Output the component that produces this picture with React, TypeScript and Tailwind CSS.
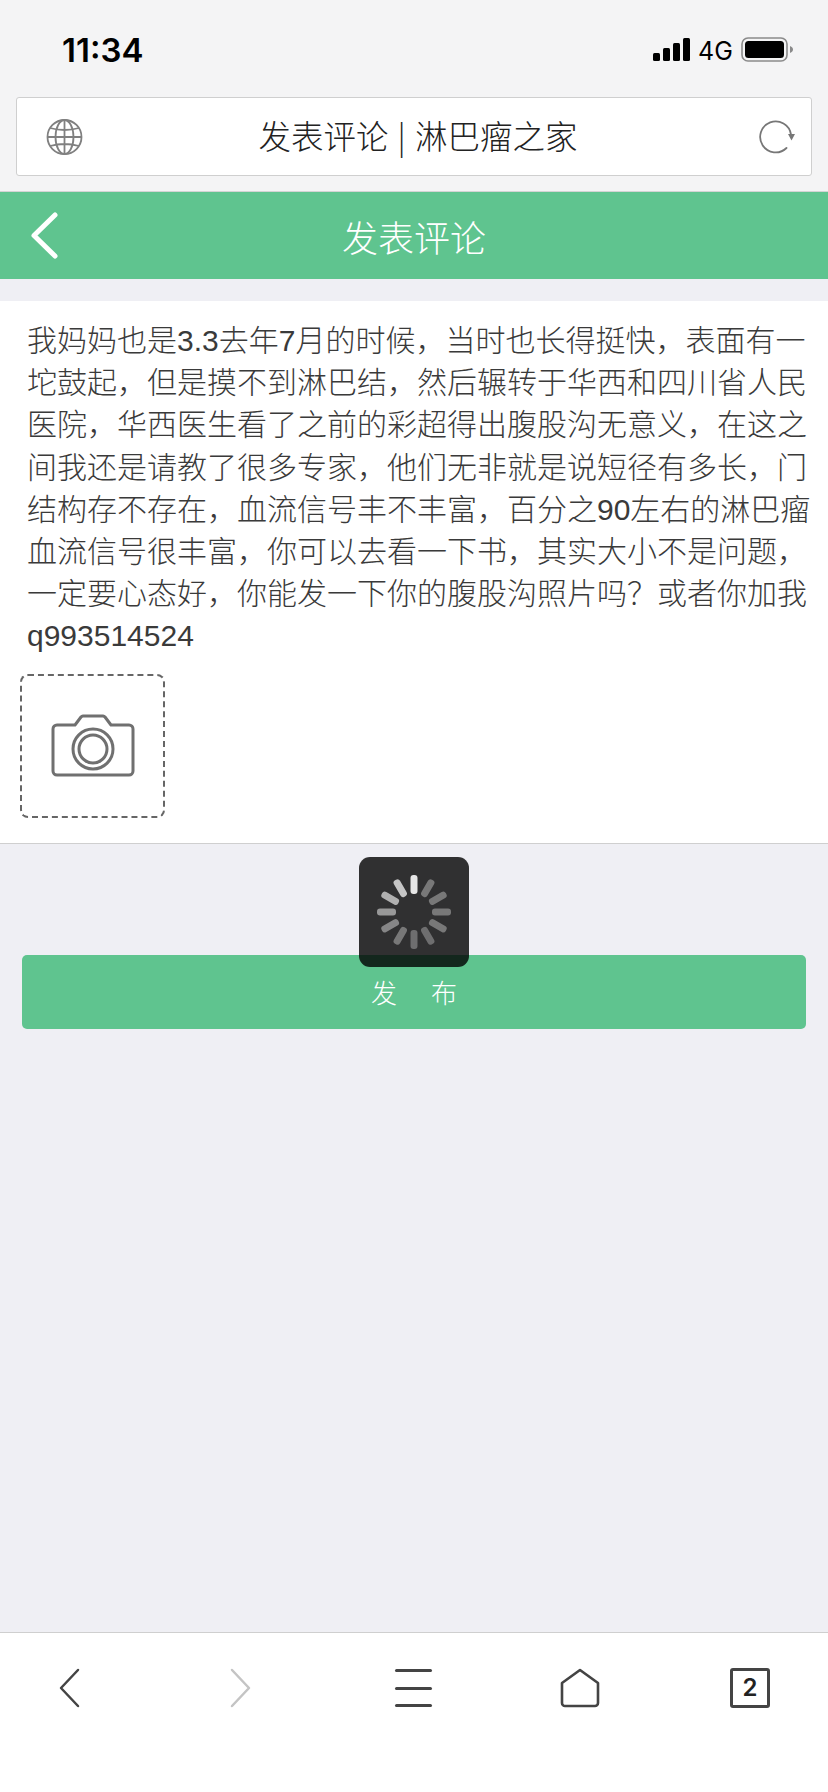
const lines = [
  '我妈妈也是3.3去年7月的时候，当时也长得挺快，表面有一',
  '坨鼓起，但是摸不到淋巴结，然后辗转于华西和四川省人民',
  '医院，华西医生看了之前的彩超得出腹股沟无意义，在这之',
  '间我还是请教了很多专家，他们无非就是说短径有多长，门',
  '结构存不存在，血流信号丰不丰富，百分之90左右的淋巴瘤',
  '血流信号很丰富，你可以去看一下书，其实大小不是问题，',
  '一定要心态好，你能发一下你的腹股沟照片吗？或者你加我',
  'q993514524',
];

const tickOpacity = [0.88, 0.35, 0.35, 0.35, 0.35, 0.3, 0.3, 0.35, 0.42, 0.5, 0.62, 0.72];

function StatusBar() {
  return (
    <div className="flex h-[97px] shrink-0 items-start bg-[#f4f4f5] pl-[62px] pt-[32px]">
      <span className="w-[591px] text-[33px] leading-[36px] font-semibold text-black [font-family:Inter,sans-serif]">11:34</span>
      <div className="flex items-end gap-[3px] pt-[6px]">
        <span className="h-[8px] w-[7px] rounded-[1.5px] bg-black"></span>
        <span className="h-[13px] w-[7px] rounded-[1.5px] bg-black"></span>
        <span className="h-[18px] w-[7px] rounded-[1.5px] bg-black"></span>
        <span className="h-[23px] w-[7px] rounded-[1.5px] bg-black"></span>
      </div>
      <span className="ml-[8px] pt-[5px] text-[25px] leading-[28px] font-normal text-black [font-family:Inter,sans-serif]">4G</span>
      <svg className="ml-[8px] mt-[5px]" width="53" height="25" viewBox="0 0 53 25">
        <rect x="1" y="1" width="45" height="23" rx="6" fill="none" stroke="#8a8a8a" strokeWidth="1.6" />
        <rect x="4" y="4" width="39" height="17" rx="3.5" fill="#000" />
        <path d="M49 9c2 .8 3 2 3 3.500s-1 2.700-3 3.500z" fill="#8a8a8a" />
      </svg>
    </div>
  );
}

function UrlBar() {
  return (
    <div className="h-[95px] shrink-0 border-b border-[#d4d4d4] bg-[#f4f4f5] px-[16px]">
      <div className="flex h-[79px] items-center rounded-[3px] border border-[#cfcfcf] bg-white pl-[29px] pr-[15px]">
        <svg width="37" height="36" viewBox="0 0 37 36" fill="none" stroke="#808080" strokeWidth="1.8">
          <circle cx="18.500" cy="18" r="17" />
          <ellipse cx="18.500" cy="18" rx="9" ry="17" />
          <path d="M18.500 1v34M1.500 18h34M4 9q14.500 4 29 0M4 27q14.500-4 29 0" />
        </svg>
        <p className="mb-[4px] flex-1 pr-[6px] text-center text-[32.500px] leading-[40px] font-light text-[#222] [font-family:'Noto_Sans_CJK_SC',sans-serif] [word-spacing:2px]">发表评论 | 淋巴瘤之家</p>
        <svg width="37" height="36" viewBox="0 0 37 36" fill="none">
          <path d="M32 15.500A15.500 15.500 0 1 0 27.500 29" stroke="#777" strokeWidth="1.800" strokeLinecap="round" />
          <path d="M29 15h7l-3.500 6.500z" fill="#777" />
        </svg>
      </div>
    </div>
  );
}

function Spinner() {
  return (
    <div className="absolute left-[359px] top-[857px] flex h-[110px] w-[110px] items-center justify-center rounded-[11px] bg-black/80">
      <svg width="80" height="80" viewBox="-40 -40 80 80">
        {tickOpacity.map((o, i) => (
          <rect key={`tick-${i}`} x="-3.500" y="-37" width="7" height="19" rx="3" fill="#fff" fillOpacity={o} transform={`rotate(${i * 30})`} />
        ))}
      </svg>
    </div>
  );
}

function BottomBar() {
  return (
    <div className="mt-auto flex h-[160px] shrink-0 items-start border-t border-[#cfcfcf] bg-white pt-[35px]">
      <svg className="ml-[58px]" width="22" height="40" viewBox="0 0 22 40" fill="none" stroke="#444" strokeWidth="2.500" strokeLinecap="round" strokeLinejoin="round">
        <path d="M20 2 3 20l17 18" />
      </svg>
      <svg className="ml-[150px]" width="22" height="40" viewBox="0 0 22 40" fill="none" stroke="#c4c4c4" strokeWidth="2.500" strokeLinecap="round" strokeLinejoin="round">
        <path d="M2 2l17 18L2 38" />
      </svg>
      <div className="ml-[143px] flex h-[40px] w-[37px] flex-col justify-between py-[1px]">
        <span className="h-[3px] rounded-full bg-[#444]"></span>
        <span className="h-[3px] rounded-full bg-[#444]"></span>
        <span className="h-[3px] rounded-full bg-[#444]"></span>
      </div>
      <svg className="ml-[128px]" width="40" height="40" viewBox="0 0 40 40" fill="none" stroke="#444" strokeWidth="2.600" strokeLinejoin="round">
        <path d="M20 2 38 15v20a3 3 0 0 1-3 3H5a3 3 0 0 1-3-3V15z" />
      </svg>
      <div className="ml-[130px] flex h-[40px] w-[40px] items-center justify-center rounded-[3px] border-[3px] border-[#444] text-[24px] leading-none font-semibold text-[#222] [font-family:Inter,sans-serif]">2</div>
    </div>
  );
}

export default function App() {
  return (
    <div className="relative flex h-[1792px] w-[828px] flex-col overflow-hidden bg-[#efeff4]">
      <StatusBar />
      <UrlBar />

      <header className="flex h-[87px] shrink-0 items-center bg-[#5fc48f] pl-[30px]">
        <svg width="28" height="47" viewBox="0 0 28 47" fill="none" stroke="#fff" strokeWidth="5" strokeLinecap="round" strokeLinejoin="round">
          <path d="M25 3 4 23.500 25 44" />
        </svg>
        <h1 className="w-[712px] text-center text-[36px] leading-[44px] font-light text-white [font-family:'Noto_Sans_CJK_SC',sans-serif]">发表评论</h1>
      </header>

      <section className="mt-[22px] flex h-[543px] shrink-0 flex-col border-b border-[#cfcfcf] bg-white pt-[19px]">
        <div className="pl-[27px] text-[30px] leading-[42.200px] font-light text-[#3a3a3a] [font-family:'Liberation_Sans','Noto_Sans_CJK_SC',sans-serif]">
          {lines.map(line => (
            <p key={line} className="whitespace-nowrap">{line}</p>
          ))}
        </div>
        <div className="ml-[20px] mt-[16px] flex h-[144px] w-[145px] items-center justify-center rounded-[8px] border-2 border-dashed border-[#666]">
          <svg width="84" height="63" viewBox="0 0 84 63" fill="none" stroke="#707070" strokeWidth="3" strokeLinejoin="round">
            <path d="M6 11h18l6-8a3 3 0 0 1 2-1h20a3 3 0 0 1 2 1l6 8h18a4 4 0 0 1 4 4v42a4 4 0 0 1-4 4H6a4 4 0 0 1-4-4V15a4 4 0 0 1 4-4z" />
            <circle cx="42" cy="35" r="20" />
            <circle cx="42" cy="35" r="14" />
          </svg>
        </div>
      </section>

      <button className="mx-[22px] mt-[111px] flex h-[74px] shrink-0 items-center justify-center gap-[34px] rounded-[5px] bg-[#5fc48f] text-[26px] leading-none font-light text-white [font-family:'Noto_Sans_CJK_SC',sans-serif]">
        <span>发</span>
        <span>布</span>
      </button>

      <Spinner />
      <BottomBar />
    </div>
  );
}
